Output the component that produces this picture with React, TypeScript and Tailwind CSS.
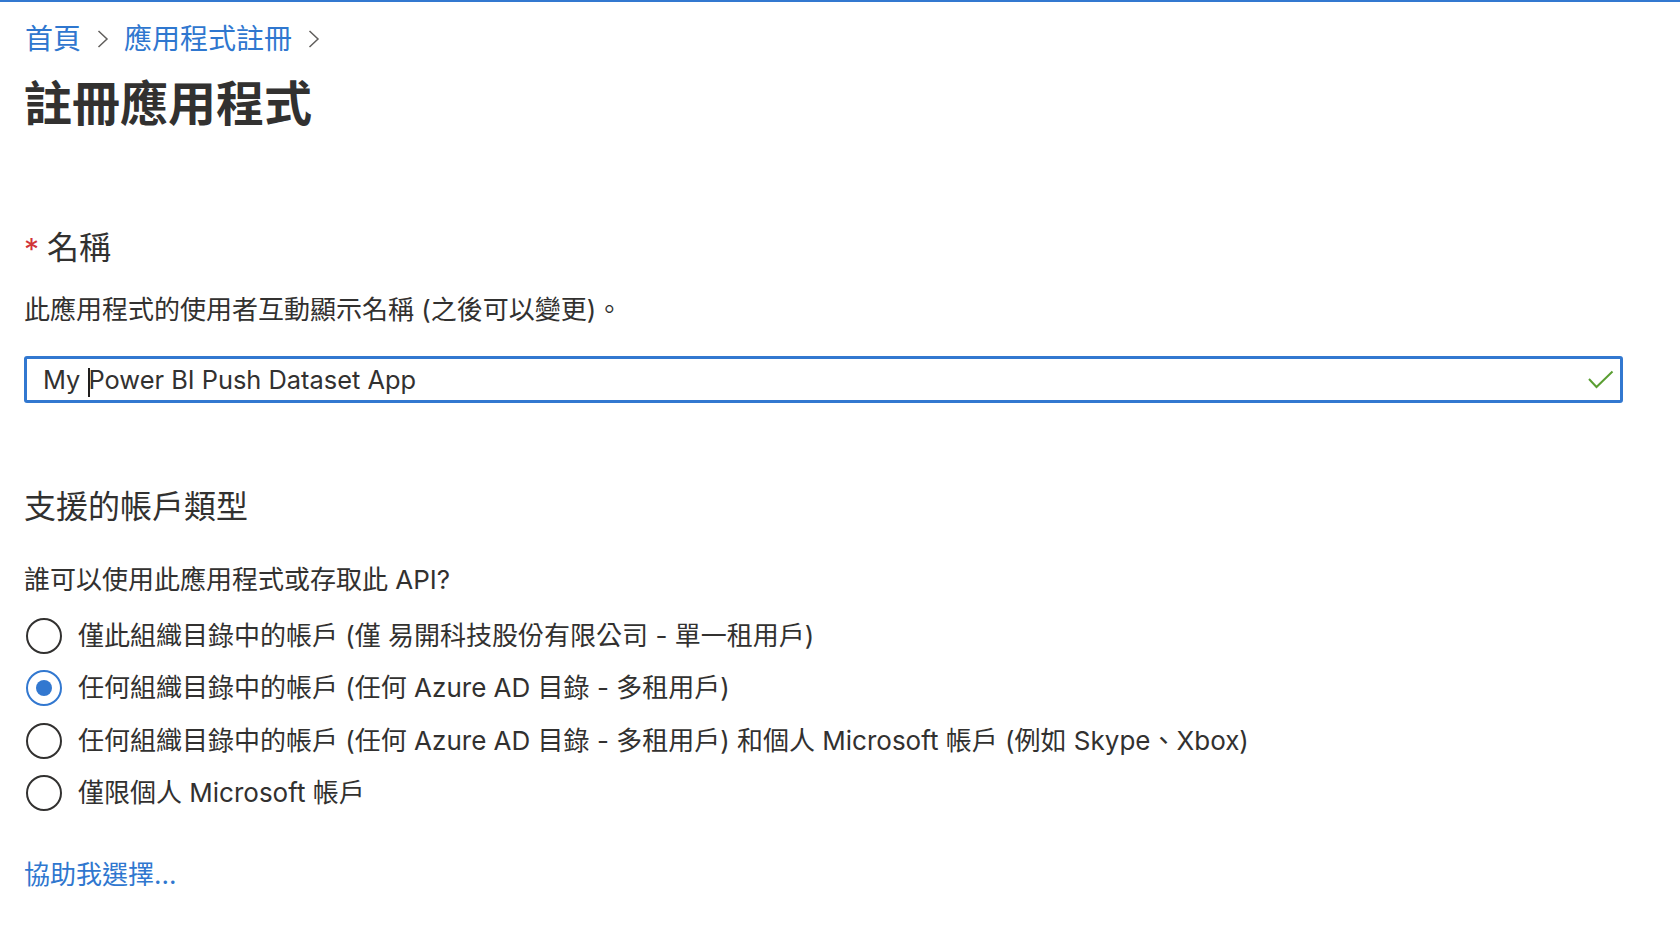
import React from "react";

const FONT = { fontFamily: "Inter, 'Noto Sans CJK TC', sans-serif" };

function Chevron() {
  return (
    <svg width="12" height="18" viewBox="0 0 12 18" className="shrink-0">
      <polyline points="1.5,1 10,9 1.5,17" fill="none" stroke="#605e5c" strokeWidth="1.5" />
    </svg>
  );
}

function Radio({ checked }: { checked?: boolean }) {
  return (
    <div
      className={`w-[36px] h-[36px] rounded-full border-[2.5px] flex items-center justify-center shrink-0 ${
        checked ? "border-[#3278d0]" : "border-[#323130]"
      }`}
    >
      {checked && <div className="w-[16px] h-[16px] rounded-full bg-[#3278d0]" />}
    </div>
  );
}

const options = [
  "僅此組織目錄中的帳戶 (僅 易開科技股份有限公司 - 單一租用戶)",
  "任何組織目錄中的帳戶 (任何 Azure AD 目錄 - 多租用戶)",
  "任何組織目錄中的帳戶 (任何 Azure AD 目錄 - 多租用戶) 和個人 Microsoft 帳戶 (例如 Skype、Xbox)",
  "僅限個人 Microsoft 帳戶",
];

export default function App() {
  return (
    <div className="min-h-screen w-full bg-white text-[#323130]" style={FONT}>
      <div className="h-[2px] w-full bg-[#3278d0]" />
      <div className="flex flex-col pl-[24px] pr-[57px]">
        {/* Breadcrumb */}
        <div className="mt-[19px] h-[36px] flex items-center text-[28px] leading-[36px]">
          <span className="text-[#2f77cf] ml-[1px]">首頁</span>
          <span className="ml-[16px] mr-[15px] flex items-center">
            <Chevron />
          </span>
          <span className="text-[#2f77cf]">應用程式註冊</span>
          <span className="ml-[16px] flex items-center">
            <Chevron />
          </span>
        </div>

        <h1 className="mt-[17px] text-[48px] leading-[60px] font-bold">註冊應用程式</h1>

        {/* Name */}
        <div className="mt-[94px] h-[40px] flex items-center text-[32px] leading-[40px]">
          <span className="text-[#d13438] text-[30px] mr-[8px] mt-[2px]">*</span>
          <span>名稱</span>
        </div>
        <p className="mt-[24px] text-[26px] leading-[36px]">此應用程式的使用者互動顯示名稱 (之後可以變更)。</p>

        <div className="mt-[28px] h-[47px] border-[3px] border-[#3278d0] rounded-[3px] flex items-center pl-[16px] pr-[6px]">
          <span className="text-[25.4px] leading-[32px] flex-1 flex items-center whitespace-pre">
            My{" "}
            <span className="inline-block w-[2px] h-[29px] bg-[#201f1e] -mr-[1px] translate-y-[3px]" />
            Power BI Push Dataset App
          </span>
          <svg width="26" height="20" viewBox="0 0 26 20" className="shrink-0">
            <polyline points="1,9 8.5,17 24.5,1.5" fill="none" stroke="#5a9e32" strokeWidth="2" />
          </svg>
        </div>

        {/* Account types */}
        <h2 className="mt-[84px] text-[32px] leading-[40px]">支援的帳戶類型</h2>
        <p className="mt-[35px] text-[26px] leading-[36px]">誰可以使用此應用程式或存取此 API?</p>

        <div className="mt-[12px] flex flex-col">
          {options.map((o, i) => (
            <label key={i} className="h-[52.33px] flex items-center gap-[16px] pl-[2px] text-[26px]">
              <Radio checked={i === 1} />
              <span className="leading-[36px]">{o}</span>
            </label>
          ))}
        </div>

        <a className="mt-[38px] text-[26px] leading-[36px] text-[#2f77cf] w-fit">協助我選擇...</a>
      </div>
    </div>
  );
}
